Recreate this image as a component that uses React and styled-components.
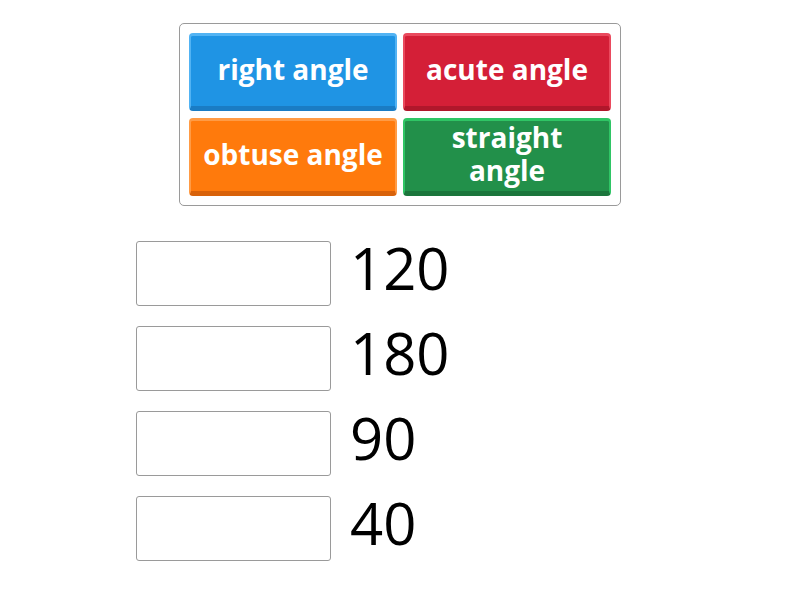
import React from 'react'
import styled, { createGlobalStyle } from 'styled-components'

const Global = createGlobalStyle`
  body {
    margin: 0;
    background: #fff;
    font-family: "Open Sans", "Liberation Sans", sans-serif;
  }
`

const Page = styled.div`
  width: 800px;
  height: 600px;
  display: flex;
  flex-direction: column;
  align-items: center;
  padding-top: 23px;
  box-sizing: border-box;
`

const Bank = styled.div`
  display: grid;
  grid-template-columns: 208px 208px;
  column-gap: 6px;
  row-gap: 7px;
  padding: 9px;
  border: 1px solid #9a9a9a;
  border-radius: 5px;
`

const palette = {
  blue: { base: '#1f94e4', top: '#52b3f3', bottom: '#1a7cc4' },
  red: { base: '#d41f37', top: '#ea4a5e', bottom: '#b0172b' },
  orange: { base: '#ff7a0c', top: '#ff9b45', bottom: '#d8620a' },
  green: { base: '#22904a', top: '#2fc565', bottom: '#1b763c' },
}

const Tile = styled.div`
  height: 78px;
  box-sizing: border-box;
  display: flex;
  align-items: center;
  justify-content: center;
  text-align: center;
  color: #fff;
  font-weight: 700;
  font-size: 28px;
  line-height: 33px;
  padding: 0 12px 4px;
  border-radius: 4px;
  background: ${p => palette[p.color].base};
  border-top: 3px solid ${p => palette[p.color].top};
  border-left: 2px solid ${p => palette[p.color].top};
  border-right: 2px solid ${p => palette[p.color].top};
  border-bottom: 5px solid ${p => palette[p.color].bottom};
`

const Rows = styled.div`
  display: flex;
  flex-direction: column;
  gap: 20px;
  margin-top: 35px;
  width: 528px;
`

const Row = styled.div`
  display: flex;
  align-items: flex-start;
  gap: 19px;
`

const Slot = styled.div`
  width: 195px;
  height: 65px;
  box-sizing: border-box;
  border: 1px solid #9a9a9a;
  border-radius: 3px;
  background: #fff;
`

const Num = styled.div`
  font-size: 58px;
  color: #000;
  line-height: 58px;
  margin-top: -2px;
`

const tiles = [
  { text: 'right angle', color: 'blue' },
  { text: 'acute angle', color: 'red' },
  { text: 'obtuse angle', color: 'orange' },
  { text: 'straight angle', color: 'green' },
]

const values = ['120', '180', '90', '40']

export default function App() {
  return (
    <>
      <Global />
      <Page>
        <Bank>
          {tiles.map(t => (
            <Tile key={t.text} color={t.color}>{t.text}</Tile>
          ))}
        </Bank>
        <Rows>
          {values.map(v => (
            <Row key={v}>
              <Slot />
              <Num>{v}</Num>
            </Row>
          ))}
        </Rows>
      </Page>
    </>
  )
}
